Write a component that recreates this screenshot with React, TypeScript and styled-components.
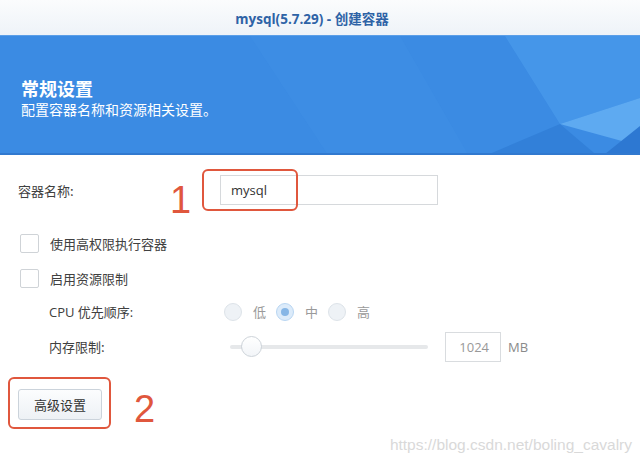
import React from "react";
import styled, { createGlobalStyle } from "styled-components";

const GlobalStyle = createGlobalStyle`
  html, body {
    margin: 0;
    padding: 0;
    background: #ffffff;
  }
  body {
    width: 640px;
    height: 461px;
    overflow: hidden;
    font-family: "Open Sans", "Noto Sans CJK SC", sans-serif;
  }
`;

const Window = styled.div`
  position: relative;
  width: 640px;
  height: 461px;
  background: #fff;
  overflow: hidden;
`;

const TitleBar = styled.div`
  height: 35px;
  display: flex;
  align-items: center;
  justify-content: center;
  background: linear-gradient(#fbfcfd, #eef3f8);
  color: #2e63a6;
  font-size: 13.5px;
  font-weight: 700;
`;

const TitleText = styled.span`
  margin-left: -16px;
`;

const Banner = styled.div`
  position: relative;
  height: 120px;
  box-sizing: border-box;
  padding: 41px 0 0 21px;
  background: #3b8be3;
  border-top: 1px solid #5b9fe8;
  border-bottom: 2px solid #3179cf;
  color: #fff;
  overflow: hidden;
`;

const BannerArt = styled.svg`
  position: absolute;
  left: 0;
  top: 0;
  width: 640px;
  height: 122px;
`;

const BannerText = styled.div`
  position: relative;
  display: flex;
  flex-direction: column;
  gap: 1px;
`;

const BannerTitle = styled.div`
  font-family: "Noto Sans CJK SC", sans-serif;
  font-size: 18px;
  font-weight: 700;
  line-height: 22px;
`;

const BannerSub = styled.div`
  font-family: "Noto Sans CJK SC", sans-serif;
  font-size: 14px;
  line-height: 18px;
`;

const Form = styled.div`
  display: flex;
  flex-direction: column;
  padding: 20px 0 0 18px;
`;

const Row = styled.div<{ $indent?: number; $height: number; $top?: number }>`
  display: flex;
  align-items: center;
  height: ${(p) => p.$height}px;
  margin-top: ${(p) => p.$top ?? 0}px;
  padding-left: ${(p) => p.$indent ?? 0}px;
`;

const Label = styled.div<{ $width?: number }>`
  width: ${(p) => (p.$width ? `${p.$width}px` : "auto")};
  flex-shrink: 0;
  white-space: nowrap;
  font-family: "Noto Sans CJK SC", sans-serif;
  font-size: 13px;
  color: #404040;
`;

const CpuLabel = styled(Label)`
  font-family: "Open Sans", "Noto Sans CJK SC", sans-serif;
`;

const InputWrap = styled.div`
  position: relative;
`;

const TextInput = styled.div`
  width: 218px;
  height: 30px;
  box-sizing: border-box;
  border: 1px solid #d6d9dc;
  padding-left: 10px;
  display: flex;
  align-items: center;
  font-size: 13px;
  color: #333;
  font-family: "Open Sans", sans-serif;
`;

const RedFrame = styled.div`
  position: absolute;
  left: -18px;
  top: -6px;
  width: 96px;
  height: 42px;
  box-sizing: border-box;
  border: 2.5px solid #e0573d;
  border-radius: 6px;
`;

const Marker = styled.span`
  color: #e0573d;
  font-family: "Liberation Sans", sans-serif;
  font-size: 38px;
  font-weight: 300;
  line-height: 1;
`;

const InputMarker = styled(Marker)`
  position: absolute;
  left: -50px;
  top: 6px;
`;

const Checkbox = styled.div`
  width: 19px;
  height: 19px;
  box-sizing: border-box;
  border: 1px solid #cfd3d7;
  border-radius: 2px;
  background: #fff;
  margin: 0 11px 0 2px;
`;

const RadioGroup = styled.div`
  display: flex;
  align-items: center;
`;

const Radio = styled.div<{ $checked?: boolean }>`
  width: 18px;
  height: 18px;
  box-sizing: border-box;
  border-radius: 50%;
  border: 1px solid ${(p) => (p.$checked ? "#b9d6f2" : "#dde3e9")};
  background: ${(p) => (p.$checked ? "#dcebfa" : "#eef2f6")};
  display: flex;
  align-items: center;
  justify-content: center;
  &::after {
    content: "";
    display: ${(p) => (p.$checked ? "block" : "none")};
    width: 8px;
    height: 8px;
    border-radius: 50%;
    background: #86b6e6;
  }
`;

const RadioText = styled.span`
  font-family: "Noto Sans CJK SC", sans-serif;
  font-size: 13px;
  color: #9a9a9a;
  margin: 0 10px 0 11px;
`;

const Slider = styled.div`
  position: relative;
  width: 198px;
  height: 4px;
  margin-left: 6px;
  background: #e6e8ea;
  border-radius: 2px;
`;

const Thumb = styled.div`
  position: absolute;
  left: 11px;
  top: -9px;
  width: 21px;
  height: 21px;
  box-sizing: border-box;
  border-radius: 50%;
  border: 1px solid #cdd3d9;
  background: linear-gradient(#ffffff, #f2f5f8);
`;

const NumberBox = styled.div`
  width: 56px;
  height: 30px;
  box-sizing: border-box;
  margin-left: 17px;
  border: 1px solid #d9dcdf;
  display: flex;
  align-items: center;
  justify-content: flex-end;
  padding-right: 11px;
  font-size: 13px;
  color: #999;
  font-family: "Open Sans", sans-serif;
`;

const Unit = styled.span`
  margin-left: 7px;
  font-size: 13px;
  color: #8a8a8a;
  font-family: "Open Sans", sans-serif;
`;

const ButtonRow = styled.div`
  display: flex;
  align-items: center;
  margin: 12px 0 0 -10px;
`;

const ButtonFrame = styled.div`
  display: flex;
  box-sizing: border-box;
  width: 103px;
  height: 52px;
  padding: 10px 0 0 8px;
  border: 2.5px solid #e0573d;
  border-radius: 6px;
`;

const Button = styled.div`
  width: 84px;
  height: 31px;
  box-sizing: border-box;
  border: 1px solid #cbd3db;
  border-radius: 3px;
  background: linear-gradient(#fcfdfe, #edf1f5);
  display: flex;
  align-items: center;
  justify-content: center;
  font-family: "Noto Sans CJK SC", sans-serif;
  font-size: 13px;
  color: #333;
`;

const ButtonMarker = styled(Marker)`
  margin: 12px 0 0 23px;
`;

const Watermark = styled.div`
  position: absolute;
  right: 8px;
  bottom: 7px;
  font-family: "Liberation Sans", sans-serif;
  font-size: 15.5px;
  color: #d9d9d9;
`;

const App: React.FC = () => {
  return (
    <>
      <GlobalStyle />
      <Window>
        <TitleBar>
          <TitleText>mysql(5.7.29) - 创建容器</TitleText>
        </TitleBar>
        <Banner>
          <BannerArt viewBox="0 0 640 122">
            <polygon points="250,0 400,0 470,122 330,122" fill="#4191e6" opacity="0.4" />
            <polygon points="505,0 640,0 640,62 560,88" fill="#4fa0ee" opacity="0.55" />
            <polygon points="560,88 640,62 640,110" fill="#5eaaf1" />
            <polygon points="480,122 560,88 600,122" fill="#3280d9" />
            <polygon points="600,122 640,90 640,122" fill="#2d78d2" />
          </BannerArt>
          <BannerText>
            <BannerTitle>常规设置</BannerTitle>
            <BannerSub>配置容器名称和资源相关设置。</BannerSub>
          </BannerText>
        </Banner>
        <Form>
          <Row $height={30}>
            <Label $width={202}>容器名称:</Label>
            <InputWrap>
              <InputMarker>1</InputMarker>
              <TextInput>mysql</TextInput>
              <RedFrame />
            </InputWrap>
          </Row>
          <Row $height={35} $top={21}>
            <Checkbox />
            <Label>使用高权限执行容器</Label>
          </Row>
          <Row $height={34}>
            <Checkbox />
            <Label>启用资源限制</Label>
          </Row>
          <Row $height={33} $indent={31}>
            <CpuLabel $width={175}>CPU 优先顺序:</CpuLabel>
            <RadioGroup>
              <Radio />
              <RadioText>低</RadioText>
              <Radio $checked />
              <RadioText>中</RadioText>
              <Radio />
              <RadioText>高</RadioText>
            </RadioGroup>
          </Row>
          <Row $height={37} $indent={31}>
            <Label $width={175}>内存限制:</Label>
            <Slider>
              <Thumb />
            </Slider>
            <NumberBox>1024</NumberBox>
            <Unit>MB</Unit>
          </Row>
          <ButtonRow>
            <ButtonFrame>
              <Button>高级设置</Button>
            </ButtonFrame>
            <ButtonMarker>2</ButtonMarker>
          </ButtonRow>
        </Form>
        <Watermark>https://blog.csdn.net/boling_cavalry</Watermark>
      </Window>
    </>
  );
};

export default App;
